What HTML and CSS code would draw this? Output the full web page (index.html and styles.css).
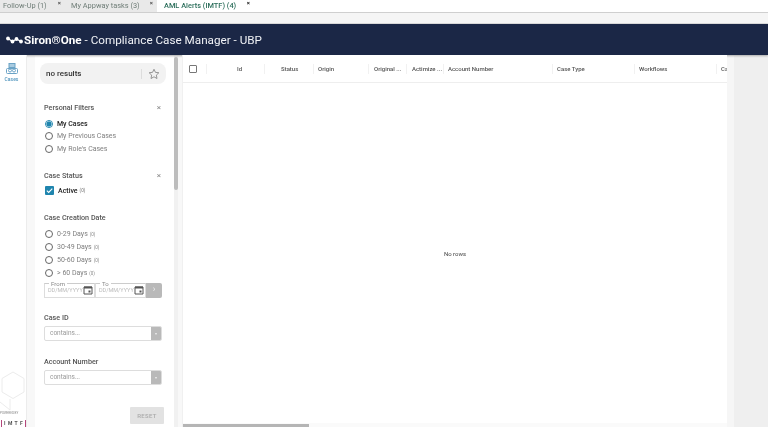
FILE: index.html
```html
<!DOCTYPE html>
<html lang="en">
<head>
<meta charset="utf-8">
<title>Siron One</title>
<link rel="stylesheet" href="styles.css">
</head>
<body>
<div class="tabs">
  <div class="tab"><span class="tab-label">Follow-Up (1)</span><span class="tab-x">×</span></div>
  <div class="tab t2"><span class="tab-label">My Appway tasks (3)</span><span class="tab-x">×</span></div>
  <div class="tab active"><span class="tab-label">AML Alerts (IMTF) (4)</span><span class="tab-x">×</span></div>
</div>
<div class="strip"></div>
<header class="banner">
  <svg class="logo" width="17" height="8" viewBox="0 0 17 8"><g fill="#fff"><circle cx="2" cy="2.500" r="1.900"/><circle cx="6.500" cy="5.500" r="1.900"/><circle cx="10.500" cy="3" r="1.900"/><circle cx="15" cy="5.500" r="1.900"/></g><path d="M2 2.500L6.500 5.500L10.500 3L15 5.500" stroke="#fff" stroke-width="1.200" fill="none"/></svg>
  <span class="brand">Siron®One</span><span class="title">&nbsp;- Compliance Case Manager - UBP</span>
</header>
<div class="main">
  <nav class="rail">
    <div class="rail-item">
      <svg width="12" height="11" viewBox="0 0 12 11" fill="none" stroke="#6ba3c6"><rect x="3" y="0.500" width="6" height="4" fill="#a9cbe0"/><rect x="0.500" y="5.500" width="11" height="5" rx="1"/><circle cx="4" cy="7.500" r="1.500"/><circle cx="8" cy="7.500" r="1.500"/></svg>
      <span>Cases</span>
    </div>
    <div class="powered">
      <svg class="hex" width="27" height="48" viewBox="0 0 27 48" fill="none" stroke="#ececec"><path d="M13 1L24 7.500V21L13 27.500L2 21V7.500Z"/><path d="M10 28V39L0 31"/></svg>
      <div class="pw">POWERED BY</div>
      <div class="imtf">I M T F</div>
    </div>
  </nav>
  <aside class="filters">
    <div class="search"><span class="search-text">no results</span><i class="search-sep"></i>
      <svg width="12" height="12" viewBox="0 0 24 24" fill="none" stroke="#8a8a8a" stroke-width="1.800"><path d="M12 2.500l2.900 6.200 6.800.8-5 4.700 1.300 6.800-6-3.400-6 3.400 1.300-6.800-5-4.700 6.800-.8z"/></svg>
    </div>
    <div class="group g-personal">
      <div class="g-head"><span>Personal Filters</span><span class="close">×</span></div>
      <div class="opt sel"><i class="radio on"></i>My Cases</div>
      <div class="opt"><i class="radio"></i>My Previous Cases</div>
      <div class="opt"><i class="radio"></i>My Role's Cases</div>
    </div>
    <div class="group g-status">
      <div class="g-head"><span>Case Status</span><span class="close">×</span></div>
      <div class="opt sel check"><svg class="cbox" width="9" height="9" viewBox="0 0 9 9"><rect width="9" height="9" rx="1" fill="#1f85ae"/><path d="M1.800 4.600l1.900 1.900 3.600-3.800" stroke="#fff" stroke-width="1.100" fill="none"/></svg>Active<small>(0)</small></div>
    </div>
    <div class="group g-date">
      <div class="g-head"><span>Case Creation Date</span></div>
      <div class="opt"><i class="radio"></i>0-29 Days<small>(0)</small></div>
      <div class="opt"><i class="radio"></i>30-49 Days<small>(0)</small></div>
      <div class="opt"><i class="radio"></i>50-60 Days<small>(0)</small></div>
      <div class="opt"><i class="radio"></i>&gt; 60 Days<small>(0)</small></div>
      <div class="dates">
        <div class="date"><em>From</em><span>DD/MM/YYYY</span><svg width="10" height="10" viewBox="0 0 10 10"><path d="M1 2h8v7H1z" fill="none" stroke="#555"/><path d="M1 1.500h8V3.500H1z" fill="#555"/><rect x="5.500" y="5.500" width="2" height="2" fill="#555"/></svg></div>
        <div class="date"><em>To</em><span>DD/MM/YYYY</span><svg width="10" height="10" viewBox="0 0 10 10"><path d="M1 2h8v7H1z" fill="none" stroke="#555"/><path d="M1 1.500h8V3.500H1z" fill="#555"/><rect x="5.500" y="5.500" width="2" height="2" fill="#555"/></svg></div>
        <div class="go">›</div>
      </div>
    </div>
    <div class="group g-id">
      <div class="g-head"><span>Case ID</span></div>
      <div class="combo"><span>contains...</span><b>▾</b></div>
    </div>
    <div class="group g-acc">
      <div class="g-head"><span>Account Number</span></div>
      <div class="combo"><span>contains...</span><b>▾</b></div>
    </div>
    <div class="reset-row"><div class="reset">RESET</div></div>
  </aside>
  <div class="vbar"><div class="vthumb"></div></div>
  <section class="grid">
    <div class="grid-head">
      <div class="col c-check"><i class="hbox"></i></div>
      <div class="col c-id">Id</div>
      <div class="col c-status">Status</div>
      <div class="col c-origin">Origin</div>
      <div class="col c-orig2">Original ...</div>
      <div class="col c-act">Actimize ...</div>
      <div class="col c-acc">Account Number</div>
      <div class="col c-type">Case Type</div>
      <div class="col c-wf">Workflows</div>
      <div class="col c-last">Ca</div>
    </div>
    <div class="grid-body">No rows</div>
    <div class="hbar"><div class="hthumb"></div></div>
  </section>
  <div class="right"></div>
</div>
</body>
</html>
```
FILE: styles.css
```css
* { box-sizing: border-box; }
html, body { margin: 0; padding: 0; }
html { background: #fff; }
body { width: 768px; height: 427px; overflow: hidden; background: #fff; font-family: Roboto, "Liberation Sans", sans-serif; color: #555; filter: blur(.35px); }
.tabs { display: flex; height: 13px; border-bottom: 1px solid #cfcfcf; overflow: hidden; background: #fff; }
.tab { display: flex; width: 71px; background: #e9e9e9; font-size: 7.400px; color: #6f7d77; line-height: 12px; padding-left: 3px; position: relative; }
.tab.t2 { width: 86px; padding-left: 0; }
.tab.active { width: 96px; background: #fff; color: #2d6f5c; font-weight: 500; padding-left: 7px; }
.tab-x { position: absolute; top: 0; right: 10px; font-size: 6px; font-weight: 700; line-height: 6px; color: #555; }
.tab.t2 .tab-x { right: 4px; }
.tab.active .tab-x { right: 3px; color: #222; }
.strip { height: 11px; background: #f5f5f5; border-bottom: 1px solid #dcdcdc; }
.banner { height: 31px; background: #1b2746; color: #fff; display: flex; align-items: center; padding-left: 6px; font-size: 11.700px; box-shadow: 0 1px 2px #aaa; position: relative; }
.logo { margin-right: 1px; }
.brand { font-weight: 700; }
.title { font-weight: 400; color: #f0f2f6; }
.main { display: flex; height: 372px; background: #f8f8f8; }
.rail { width: 27px; border-right: 1px solid #ececec; position: relative; flex: none; background: #fff; }
.rail-item { display: flex; flex-direction: column; align-items: center; padding: 8px 3px 0 0; color: #4f94bd; font-size: 5px; }
.rail-item span { margin-top: 2px; font-weight: 500; }
.powered { position: absolute; left: 0; bottom: 0; width: 27px; height: 56px; }
.hex { position: absolute; left: 0; top: 0; }
.pw { position: absolute; top: 40px; left: 0; font-size: 3px; line-height: 4px; white-space: nowrap; color: #888; }
.imtf { position: absolute; top: 49px; left: 1px; font-size: 5px; line-height: 7px; color: #555; border-left: 1px solid #b5477c; border-right: 1px solid #b5477c; padding: 0 2px; white-space: nowrap; font-weight: 700; letter-spacing: .6px; }
.filters { width: 139px; background: #fff; margin-left: 8px; padding: 8px 0 0 9px; flex: none; display: flex; flex-direction: column; }
.search { display: flex; align-items: center; width: 126px; height: 21px; background: #f2f2f2; border-radius: 8px; padding: 0 6px; margin-left: -4px; flex: none; }
.search-text { font-size: 8px; font-weight: 500; color: #333; }
.search-sep { width: 1px; height: 10px; background: #ddd; margin: 0 6px 0 auto; }
.group { width: 125px; flex: none; }
.g-head { display: flex; justify-content: space-between; font-size: 7.200px; font-weight: 500; color: #555; line-height: 10px; padding-right: 8px; }
.close { color: #888; font-weight: 400; font-size: 8px; }
.g-personal { margin-top: 19px; }
.g-status { margin-top: 15.500px; }
.g-date { margin-top: 15px; }
.g-id { margin-top: 15px; }
.g-acc { margin-top: 16px; }
.opt { display: flex; align-items: center; font-size: 7px; color: #808080; height: 13px; }
.g-personal .opt { height: 12.500px; }
.opt small { font-size: 4.500px; margin-left: 2px; color: #888; }
.sel { color: #222; font-weight: 500; }
.radio { width: 8px; height: 8px; border-radius: 50%; border: 1px solid #666; margin: 0 4px 0 1px; flex: none; background: #fff; }
.radio.on { border-color: #1f85ae; background: radial-gradient(circle, #1f85ae 0 2.300px, #fff 2.800px); }
.g-personal .g-head { margin-bottom: 4.500px; }
.g-status .g-head { margin-bottom: 3px; }
.g-date .g-head { margin-bottom: 5px; }
.cbox { margin: 0 4px 0 1px; flex: none; }
.check { height: 14px; }
.dates { display: flex; height: 15px; margin-top: 3px; position: relative; width: 118px; }
.date { width: 51px; border: 1px solid #ddd; border-top-color: #ccc; background: #fff; display: flex; align-items: center; justify-content: space-between; padding: 0 0 0 3px; font-size: 5.500px; color: #bbb; position: relative; }
.date svg { flex: none; margin-right: 1px; }
.date span { white-space: nowrap; }
.date em { position: absolute; top: -4px; left: 4px; font-style: normal; background: #fff; padding: 0 2px; font-size: 6px; line-height: 7px; color: #888; }
.go { flex: 1; background: #b9b9b9; color: #eee; font-size: 9px; text-align: center; line-height: 13px; border-radius: 0 2px 2px 0; }
.g-head + .combo { margin-top: 3px; }
.combo { width: 118px; height: 15px; background: #fff; border: 1px solid #ddd; border-radius: 2px; display: flex; justify-content: space-between; align-items: center; font-size: 6.500px; color: #999; padding-left: 5px; overflow: hidden; }
.combo b { width: 10px; height: 15px; background: #b9b9b9; color: #eee; font-size: 4px; text-align: center; line-height: 15px; font-weight: 400; }
.reset-row { display: flex; justify-content: flex-end; width: 120px; margin-top: 22px; }
.reset { width: 34px; height: 17px; background: #e2e2e2; color: #aaa; font-size: 6px; font-weight: 500; line-height: 17px; text-align: center; letter-spacing: .3px; border-radius: 1px; }
.vbar { width: 4px; background: #f1f1f1; flex: none; }
.vthumb { height: 133px; margin-top: 2px; background: #bdbdbd; border-radius: 2px; }
.grid { width: 545px; margin-left: 4px; flex: none; position: relative; background: #fff; border-left: 1px solid #f0f0f0; overflow: hidden; display: flex; flex-direction: column; }
.grid-head { display: flex; height: 28px; border-bottom: 1px solid #eee; font-size: 6px; font-weight: 500; color: #555; line-height: 28px; white-space: nowrap; flex: none; }
.col { flex: none; overflow: hidden; padding-left: 4px; position: relative; }
.col::after { content: ""; position: absolute; right: 0; top: 9px; height: 10px; width: 1px; background: #f1f1f1; }
.c-check { width: 24px; padding-left: 6px; }
.hbox { display: block; width: 8px; height: 8px; border: 1px solid #777; border-radius: 1px; margin-top: 10px; }
.c-id { width: 58px; padding-left: 30px; }
.c-status { width: 49px; padding-left: 16px; }
.c-origin { width: 55px; }
.c-orig2 { width: 38px; padding-left: 5px; }
.c-act { width: 37px; padding-left: 5px; }
.c-acc { width: 109px; }
.c-type { width: 82px; }
.c-wf { width: 82px; }
.c-last { width: 11px; }
.c-last::after { display: none; }
.grid-body { flex: 1; display: flex; align-items: center; justify-content: center; font-size: 6px; color: #444; }
.hbar { height: 4px; flex: none; background: #fafafa; }
.hthumb { width: 126px; height: 3px; margin-top: 1px; background: #b5b5b5; }
.right { flex: 1; background: #efefef; border-left: 7px solid #f6f6f6; }
```
